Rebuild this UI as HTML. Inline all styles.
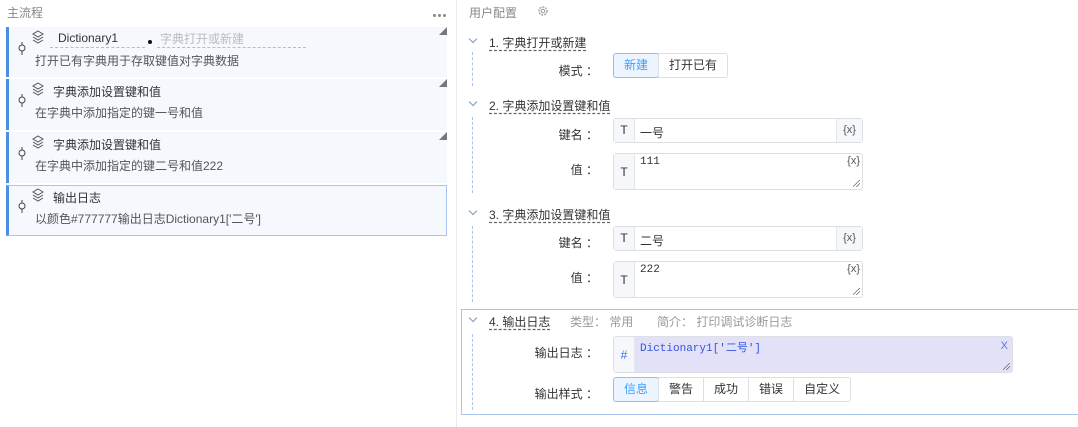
<!DOCTYPE html><html><head><meta charset="utf-8"><style>
*{margin:0;padding:0;box-sizing:border-box}
body{width:1078px;height:427px;background:#fff;font-family:"Liberation Sans","Noto Sans CJK SC",sans-serif;font-size:12px;color:#333;position:relative;overflow:hidden}
.a{position:absolute;white-space:nowrap}
.card{position:absolute;left:6px;width:441px;background:#f5f8fd;border-left:3px solid #4a90e2}
.card .t{position:absolute;left:44px;top:4px;font-size:12px;color:#333}
.card .s{position:absolute;left:26px;top:25px;color:#555}
.card svg.l{position:absolute;left:23px;top:3px}
.card svg.p{position:absolute;left:9px;top:15px}
.tri{position:absolute;right:0;top:0;width:0;height:0;border-top:8px solid transparent;border-right:8px solid #777}
.hd{position:absolute;left:489px;font-size:12px;color:#333;text-decoration:underline dashed #666;text-underline-offset:3px}
.chev{position:absolute;left:470px;width:6px;height:6px;border-right:1px solid #7a9ab8;border-bottom:1px solid #7a9ab8;transform:rotate(45deg)}
.dl{position:absolute;left:472px;width:0;border-left:1px dashed #a9c4f0}
.lb{position:absolute;width:90px;text-align:right;color:#333;left:508px}
.inp{position:absolute;left:613px;width:250px;border:1px solid #dcdfe6;border-radius:3px;background:#fff}
.inp .T{position:absolute;left:0;top:0;bottom:0;width:21px;background:#f5f7fa;border-right:1px solid #e4e7ed;text-align:center;color:#333}
.x{position:absolute;color:#555;font-size:11px}
.btns{position:absolute;display:flex;border:1px solid #dcdfe6;border-radius:3px;height:25px}
.btns div{padding:0 10px;line-height:23px;border-left:1px solid #dcdfe6;color:#333}
.btns div:first-child{border-left:none;background:#ecf5ff;color:#409eff;outline:1px solid #8fc1f5;border-radius:2px}
.rs{position:absolute;right:2px;bottom:2px;width:7px;height:7px;background:linear-gradient(135deg,transparent 45%,#666 45%,#666 52%,transparent 52%,transparent 70%,#666 70%,#666 77%,transparent 77%)}
.dot{position:absolute;top:14px;width:3px;height:3px;border-radius:2px;background:#888}
</style></head><body>
<div class="a" style="left:7px;top:4px;color:#888;font-size:12px">主流程</div>
<div class="dot" style="left:433px"></div><div class="dot" style="left:438px"></div><div class="dot" style="left:443px"></div>
<div class="a" style="left:456px;top:0;width:1px;height:427px;background:#eaeaea"></div>

<svg width="0" height="0" style="position:absolute"><defs>
<g id="ly"><path d="M6 1L11 4L6 7L1 4Z M1 7L6 10L11 7 M1 10L6 13L11 10" fill="none" stroke="#555" stroke-width="1"/></g>
<g id="pn"><circle cx="4" cy="6" r="3" fill="none" stroke="#444"/><path d="M4 0V3M4 9V13" stroke="#444"/></g>
</defs></svg>

<div class="card" style="top:27px;height:50px"><div class="tri"></div>
<svg class="l" width="13" height="14"><use href="#ly"/></svg><svg class="p" width="8" height="14"><use href="#pn"/></svg>
<div class="t" style="left:49px">Dictionary1</div>
<div class="a" style="left:41px;top:20px;width:95px;border-top:1px dashed #bbb"></div>
<div class="a" style="left:139px;top:13px;width:4px;height:4px;border-radius:2px;background:#111"></div>
<div class="a" style="left:151px;top:3px;color:#bbb">字典打开或新建</div>
<div class="a" style="left:148px;top:20px;width:149px;border-top:1px dashed #bbb"></div>
<div class="s">打开已有字典用于存取键值对字典数据</div></div>

<div class="card" style="top:79px;height:51px"><div class="tri"></div>
<svg class="l" width="13" height="14"><use href="#ly"/></svg><svg class="p" width="8" height="14"><use href="#pn"/></svg>
<div class="t">字典添加设置键和值</div><div class="s">在字典中添加指定的键一号和值</div></div>

<div class="card" style="top:132px;height:51px"><div class="tri"></div>
<svg class="l" width="13" height="14"><use href="#ly"/></svg><svg class="p" width="8" height="14"><use href="#pn"/></svg>
<div class="t">字典添加设置键和值</div><div class="s">在字典中添加指定的键二号和值222</div></div>

<div class="card" style="top:185px;height:51px;border-top:1px solid #a9c4f0;border-right:1px solid #a9c4f0;border-bottom:1px solid #a9c4f0">
<svg class="l" width="13" height="14" style="top:2px"><use href="#ly"/></svg><svg class="p" width="8" height="14" style="top:14px"><use href="#pn"/></svg>
<div class="t" style="top:3px">输出日志</div><div class="s" style="top:24px">以颜色#777777输出日志Dictionary1['二号']</div></div>

<!-- right -->
<div class="a" style="left:469px;top:4px;color:#888">用户配置</div>
<svg class="a" style="left:537px;top:5px" width="12" height="12"><circle cx="6" cy="6" r="4" fill="none" stroke="#999" stroke-width="1.3" stroke-dasharray="2 1"/><circle cx="6" cy="6" r="1.8" fill="none" stroke="#999"/></svg>

<div class="chev" style="top:36px"></div><div class="hd" style="top:34px">1. 字典打开或新建</div>
<div class="dl" style="top:52px;height:34px"></div>
<div class="lb" style="top:62px">模式 ：</div>
<div class="btns" style="left:613px;top:53px"><div>新建</div><div>打开已有</div></div>

<div class="chev" style="top:99px"></div><div class="hd" style="top:97px">2. 字典添加设置键和值</div>
<div class="dl" style="top:117px;height:76px"></div>
<div class="lb" style="top:126px">键名 ：</div>
<div class="inp" style="top:118px;height:25px"><div class="T" style="line-height:23px">T</div><div class="a" style="left:26px;top:5px">一号</div><div class="a" style="right:0;top:0;width:26px;height:23px;background:#f5f7fa;border-left:1px solid #e4e7ed;text-align:center;line-height:22px;font-size:11px;color:#555">{x}</div></div>
<div class="lb" style="top:161px">值 ：</div>
<div class="inp" style="top:153px;height:37px"><div class="T" style="line-height:36px">T</div><div class="a" style="left:26px;top:2px;font-family:'Liberation Mono',monospace;font-size:11px">111</div><div class="x" style="right:2px;top:1px">{x}</div><div class="rs"></div></div>

<div class="chev" style="top:208px"></div><div class="hd" style="top:206px">3. 字典添加设置键和值</div>
<div class="dl" style="top:226px;height:76px"></div>
<div class="lb" style="top:234px">键名 ：</div>
<div class="inp" style="top:226px;height:25px"><div class="T" style="line-height:23px">T</div><div class="a" style="left:26px;top:5px">二号</div><div class="a" style="right:0;top:0;width:26px;height:23px;background:#f5f7fa;border-left:1px solid #e4e7ed;text-align:center;line-height:22px;font-size:11px;color:#555">{x}</div></div>
<div class="lb" style="top:269px">值 ：</div>
<div class="inp" style="top:261px;height:37px"><div class="T" style="line-height:36px">T</div><div class="a" style="left:26px;top:2px;font-family:'Liberation Mono',monospace;font-size:11px">222</div><div class="x" style="right:2px;top:1px">{x}</div><div class="rs"></div></div>

<div class="a" style="left:461px;top:309px;width:617px;height:106px;border:1px solid #a9c4f0;border-right:none"></div>
<div class="chev" style="top:315px"></div><div class="hd" style="top:313px">4. 输出日志</div>
<div class="a" style="left:570px;top:313px;color:#999">类型： 常用</div>
<div class="a" style="left:657px;top:313px;color:#999">简介： 打印调试诊断日志</div>
<div class="dl" style="top:334px;height:76px"></div>
<div class="lb" style="top:344px">输出日志 ：</div>
<div class="inp" style="top:336px;height:37px;width:400px;background:#e3e1f8"><div class="T" style="line-height:36px;color:#4a6cf7">#</div><div class="a" style="left:26px;top:2px;font-family:'Liberation Mono','Noto Sans CJK SC',monospace;font-size:11px;color:#3355dd">Dictionary1['二号']</div><div class="x" style="right:4px;top:3px;color:#6677dd">X</div><div class="rs"></div></div>
<div class="lb" style="top:385px">输出样式 ：</div>
<div class="btns" style="left:613px;top:377px"><div>信息</div><div>警告</div><div>成功</div><div>错误</div><div>自定义</div></div>
</body></html>
